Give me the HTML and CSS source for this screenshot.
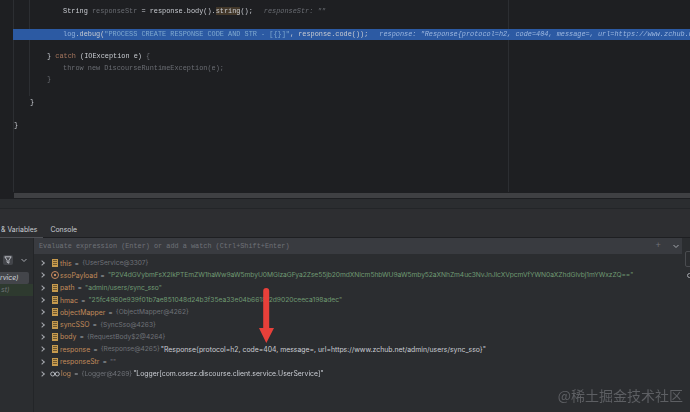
FILE: index.html
```html
<!DOCTYPE html>
<html lang="en">
<head>
    <meta charset="UTF-8">
    <title>Debugger</title>
    <link rel="stylesheet" href="styles.css">
</head>
<body>
    <div class="editor">
        <div class="guide guide-gutter"></div>
        <div class="guide guide-indent"></div>
        <div class="guide guide-margin"></div>
        <div class="code-line indent-3"><span class="fg">String</span> <span class="dim">responseStr</span> <span class="fg">= response.body().<span class="match">string</span>();</span><span class="hint">responseStr: ""</span></div>
        <div class="code-line"></div>
        <div class="code-line indent-3 exec"><span class="field">log</span><span class="fg">.debug(</span><span class="str">"PROCESS CREATE RESPONSE CODE AND STR - [{}]"</span><span class="fg">, response.code());</span><span class="hint hint-exec">response: "Response{protocol=h2, code=404, message=, url=https://www.zchub.net/admin/users/sync_sso}"</span></div>
        <div class="code-line"></div>
        <div class="code-line indent-2"><span class="fg">}</span> <span class="kw">catch</span> <span class="fg">(IOException e)</span> <span class="dim">{</span></div>
        <div class="code-line indent-3 dim">throw new DiscourseRuntimeException(e);</div>
        <div class="code-line indent-2 dim">}</div>
        <div class="code-line"></div>
        <div class="code-line indent-1 fg">}</div>
        <div class="code-line"></div>
        <div class="code-line indent-0 fg">}</div>
        <div class="scrollbar"></div>
    </div>

    <div class="panel">
        <div class="tabs">
            <div class="tab tab-active">&amp; Variables</div>
            <div class="tab">Console</div>
        </div>
        <div class="debug">
            <div class="frames">
                <div class="frame-tools">
                    <span class="filter-btn">
                        <svg width="8" height="8" viewBox="0 0 8 8"><path d="M.8.8h6.4L4.9 4.2v3L3.1 6.2v-2z" fill="none" stroke="#c9ccd2" stroke-width=".9"/></svg>
                    </span>
                    <svg class="chev" width="8" height="8" viewBox="0 0 8 8"><path d="M1.5 3l2.5 2.5L6.5 3" fill="none" stroke="#a4a7ad" stroke-width="1"/></svg>
                </div>
                <div class="frame frame-active">rvice)</div>
                <div class="frame frame-dim">st)</div>
            </div>
            <div class="vars">
                <div class="eval">
                    <span class="eval-text">Evaluate expression (Enter) or add a watch (Ctrl+Shift+Enter)</span>
                    <span class="eval-plus">+</span>
                    <svg class="chev" width="8" height="8" viewBox="0 0 8 8"><path d="M1.5 3l2.5 2.5L6.5 3" fill="none" stroke="#a4a7ad" stroke-width="1"/></svg>
                </div>
                <ul class="var-list">
                    <li class="var"><span class="arrow"></span><span class="ico ico-field"></span><span class="name">this</span><span class="eq">=</span><span class="ref">{UserService@3307}</span></li>
                    <li class="var"><span class="arrow"></span><span class="ico ico-param"></span><span class="name">ssoPayload</span><span class="eq">=</span><span class="val-str val-long">"P2V4dGVybmFsX2lkPTEmZW1haWw9aW5mbyU0MGlzaGFya2Zse55jb20mdXNlcm5hbWU9aW5mby52aXNhZm4uc3NvJnJlcXVpcmVfYWN0aXZhdGlvbj1mYWxzZQ=="</span></li>
                    <li class="var"><span class="arrow"></span><span class="ico ico-field"></span><span class="name">path</span><span class="eq">=</span><span class="val-str">"admin/users/sync_sso"</span></li>
                    <li class="var"><span class="arrow"></span><span class="ico ico-field"></span><span class="name">hmac</span><span class="eq">=</span><span class="val-str">"25fc4960e939f01b7ae851048d24b3f35ea33e04b6618f2d9020ceeca198adec"</span></li>
                    <li class="var"><span class="arrow"></span><span class="ico ico-field"></span><span class="name">objectMapper</span><span class="eq">=</span><span class="ref">{ObjectMapper@4262}</span></li>
                    <li class="var"><span class="arrow"></span><span class="ico ico-field"></span><span class="name">syncSSO</span><span class="eq">=</span><span class="ref">{SyncSso@4263}</span></li>
                    <li class="var"><span class="arrow"></span><span class="ico ico-field"></span><span class="name">body</span><span class="eq">=</span><span class="ref">{RequestBody$2@4264}</span></li>
                    <li class="var"><span class="arrow"></span><span class="ico ico-field"></span><span class="name">response</span><span class="eq">=</span><span class="ref">{Response@4265}</span><span class="val-plain">"Response{protocol=h2, code=404, message=, url=https://www.zchub.net/admin/users/sync_sso}"</span></li>
                    <li class="var"><span class="arrow"></span><span class="ico ico-field"></span><span class="name">responseStr</span><span class="eq">=</span><span class="ref">""</span></li>
                    <li class="var"><span class="arrow"></span><span class="ico ico-link">
                        <svg width="10" height="6" viewBox="0 0 10 6"><circle cx="2.7" cy="3" r="2" fill="none" stroke="#b4b7bd" stroke-width="1"/><circle cx="7.3" cy="3" r="2" fill="none" stroke="#b4b7bd" stroke-width="1"/></svg>
                    </span><span class="name">log</span><span class="eq">=</span><span class="ref">{Logger@4269}</span><span class="val-plain">"Logger[com.ossez.discourse.client.service.UserService]"</span></li>
                </ul>
            </div>
            <div class="side">
                <div class="side-box"></div>
                <div class="side-dot"></div>
            </div>
        </div>
    </div>

    <svg class="arrow-mark" width="15" height="55" viewBox="0 0 15 55"><path d="M4.2 3a3 3 0 0 1 6 0V40H15L7.3 55 0 40h4.2z" fill="#e8403a"/></svg>
    <div class="watermark">@稀土掘金技术社区</div>
</body>
</html>
```

FILE: styles.css
```css
html, body {
    margin: 0;
    height: 100%;
    overflow: hidden;
}
body {
    width: 690px;
    height: 412px;
    position: relative;
    background-color: #2b2d30;
    font-family: Inter, "Noto Sans", sans-serif;
    display: flex;
    flex-direction: column;
}

/* editor */
.editor {
    position: relative;
    height: 199px;
    padding-top: 5.8px;
    box-sizing: border-box;
    background-color: #1e1f22;
    font-family: "Liberation Mono", monospace;
    font-size: 6.88px;
    overflow: hidden;
    filter: blur(0.35px);
}
.guide {
    position: absolute;
    top: 0;
    width: 1px;
    height: 192px;
    background-color: #2c2e32;
}
.guide-gutter {
    left: 13px;
}
.guide-indent {
    left: 29px;
    height: 96px;
}
.guide-margin {
    left: 508px;
}
.scrollbar {
    position: absolute;
    left: 14px;
    right: 0;
    top: 193px;
    height: 5px;
    background-color: #3f4043;
}
.code-line {
    position: relative;
    height: 11.4px;
    line-height: 11.4px;
    white-space: pre;
}
.indent-0 { padding-left: 14px; }
.indent-1 { padding-left: 30px; }
.indent-2 { padding-left: 47px; }
.indent-3 { padding-left: 63px; }
.exec {
    margin-left: 13px;
    padding-left: 50px;
    background-color: #2c5aa3;
}
.fg { color: #c9ccd2; }
.dim { color: #6a6d73; }
.kw { color: #a9785f; }
.field { color: #8fb0dc; }
.str { color: #7fa9cf; }
.match { background-color: #43382a; }
.hint {
    margin-left: 11px;
    color: #6a6d73;
    font-style: italic;
}
.hint-exec {
    color: #9db8e0;
}

/* debug panel */
.panel {
    flex: 1;
    background-color: #2b2d30;
    filter: blur(0.35px);
}
.tabs {
    display: flex;
    height: 28px;
    margin-top: 9px;
    border-top: 1px solid #232528;
    border-bottom: 1px solid #1e1f22;
    background-color: #2d2e31;
    font-size: 6.9px;
    color: #c9ccd2;
}
.tab {
    display: flex;
    align-items: center;
    padding: 12px 0 0 1px;
    margin-right: 6px;
}
.tab-active {
    box-shadow: inset 0 -1px 0 #4e5055;
    padding-right: 6px;
    height: 29px;
    box-sizing: border-box;
}
.debug {
    display: flex;
}
.frames {
    width: 34px;
    flex-shrink: 0;
    height: 174px;
    border-right: 1px solid #232528;
    box-sizing: border-box;
    font-size: 6.9px;
}
.frame-tools {
    display: flex;
    align-items: center;
    height: 10px;
    margin-top: 17px;
    margin-left: 3px;
    gap: 7px;
}
.filter-btn {
    display: flex;
    align-items: center;
    justify-content: center;
    width: 10px;
    height: 10px;
    background-color: #43454a;
    border-radius: 2px;
}
.frame {
    height: 12px;
    line-height: 12px;
    white-space: nowrap;
}
.frame-active {
    margin-top: 7px;
    margin-right: 4px;
    background-color: #43454a;
    color: #d0d3d8;
    font-style: italic;
    border-radius: 0 2px 2px 0;
}
.frame-dim {
    padding-left: 1px;
    color: #6f7278;
    background-color: #2e3a2f;
    font-style: italic;
}
.vars {
    flex: 1;
    min-width: 0;
}
.eval {
    display: flex;
    align-items: center;
    height: 16px;
    padding-left: 5px;
    background-color: #393b40;
    font-family: "Liberation Mono", monospace;
    font-size: 6.85px;
    color: #6f7278;
}
.eval-text {
    flex: 1;
}
.eval-plus {
    margin-right: 11px;
    font-size: 9px;
    color: #6f7278;
}
.eval .chev {
    margin-right: 2px;
}
.var-list {
    list-style: none;
    margin: 3px 0 0;
    padding: 0;
    font-size: 6.88px;
}
.var {
    display: flex;
    align-items: center;
    height: 12.3px;
    white-space: nowrap;
}
.arrow {
    width: 3px;
    height: 3px;
    margin: 0 5px 0 6px;
    border-top: 1px solid #a4a7ad;
    border-right: 1px solid #a4a7ad;
    transform: rotate(45deg);
    flex-shrink: 0;
}
.ico {
    width: 6px;
    height: 8px;
    margin: 0 2px 0 3px;
    flex-shrink: 0;
    box-sizing: border-box;
}
.ico-field {
    border: 1px solid #c69a4e;
    background: repeating-linear-gradient(#6d5730 0 1px, #c69a4e 1px 2px);
}
.ico-param {
    width: 8px;
    height: 8px;
    margin: 0 1px 0 2px;
    border: 1px solid #c98a5e;
    border-radius: 50%;
    background: radial-gradient(#c98a5e 0 1.2px, transparent 1.6px);
}
.ico-link {
    width: 10px;
    height: 6px;
    margin: 0 1px 0 1px;
    display: flex;
}
.name {
    color: #c08a5a;
}
.eq {
    margin: 0 3px;
    color: #a4a7ad;
}
.ref {
    color: #6f7278;
    font-size: 6.6px;
    margin-right: 1px;
}
.val-str {
    color: #6f9a72;
    font-size: 6.7px;
}
.val-long {
    letter-spacing: -0.06px;
}
.val-plain {
    color: #c9ccd2;
}
.side {
    width: 8px;
    flex-shrink: 0;
}
.side-box {
    width: 8px;
    height: 16px;
    margin: 13px 0 0 3px;
    box-sizing: border-box;
    border: 1px solid #4a4c50;
    border-radius: 2px;
}
.side-dot {
    width: 5px;
    height: 5px;
    margin: 6px 0 0 5px;
    box-sizing: border-box;
    border: 1px solid #a4a7ad;
    border-radius: 50%;
}

/* overlays */
.arrow-mark {
    position: absolute;
    left: 259px;
    top: 288px;
}
.watermark {
    position: absolute;
    right: 7px;
    bottom: 7px;
    font-family: "Noto Sans CJK SC", sans-serif;
    font-size: 14px;
    color: #5d5f63;
}
```
